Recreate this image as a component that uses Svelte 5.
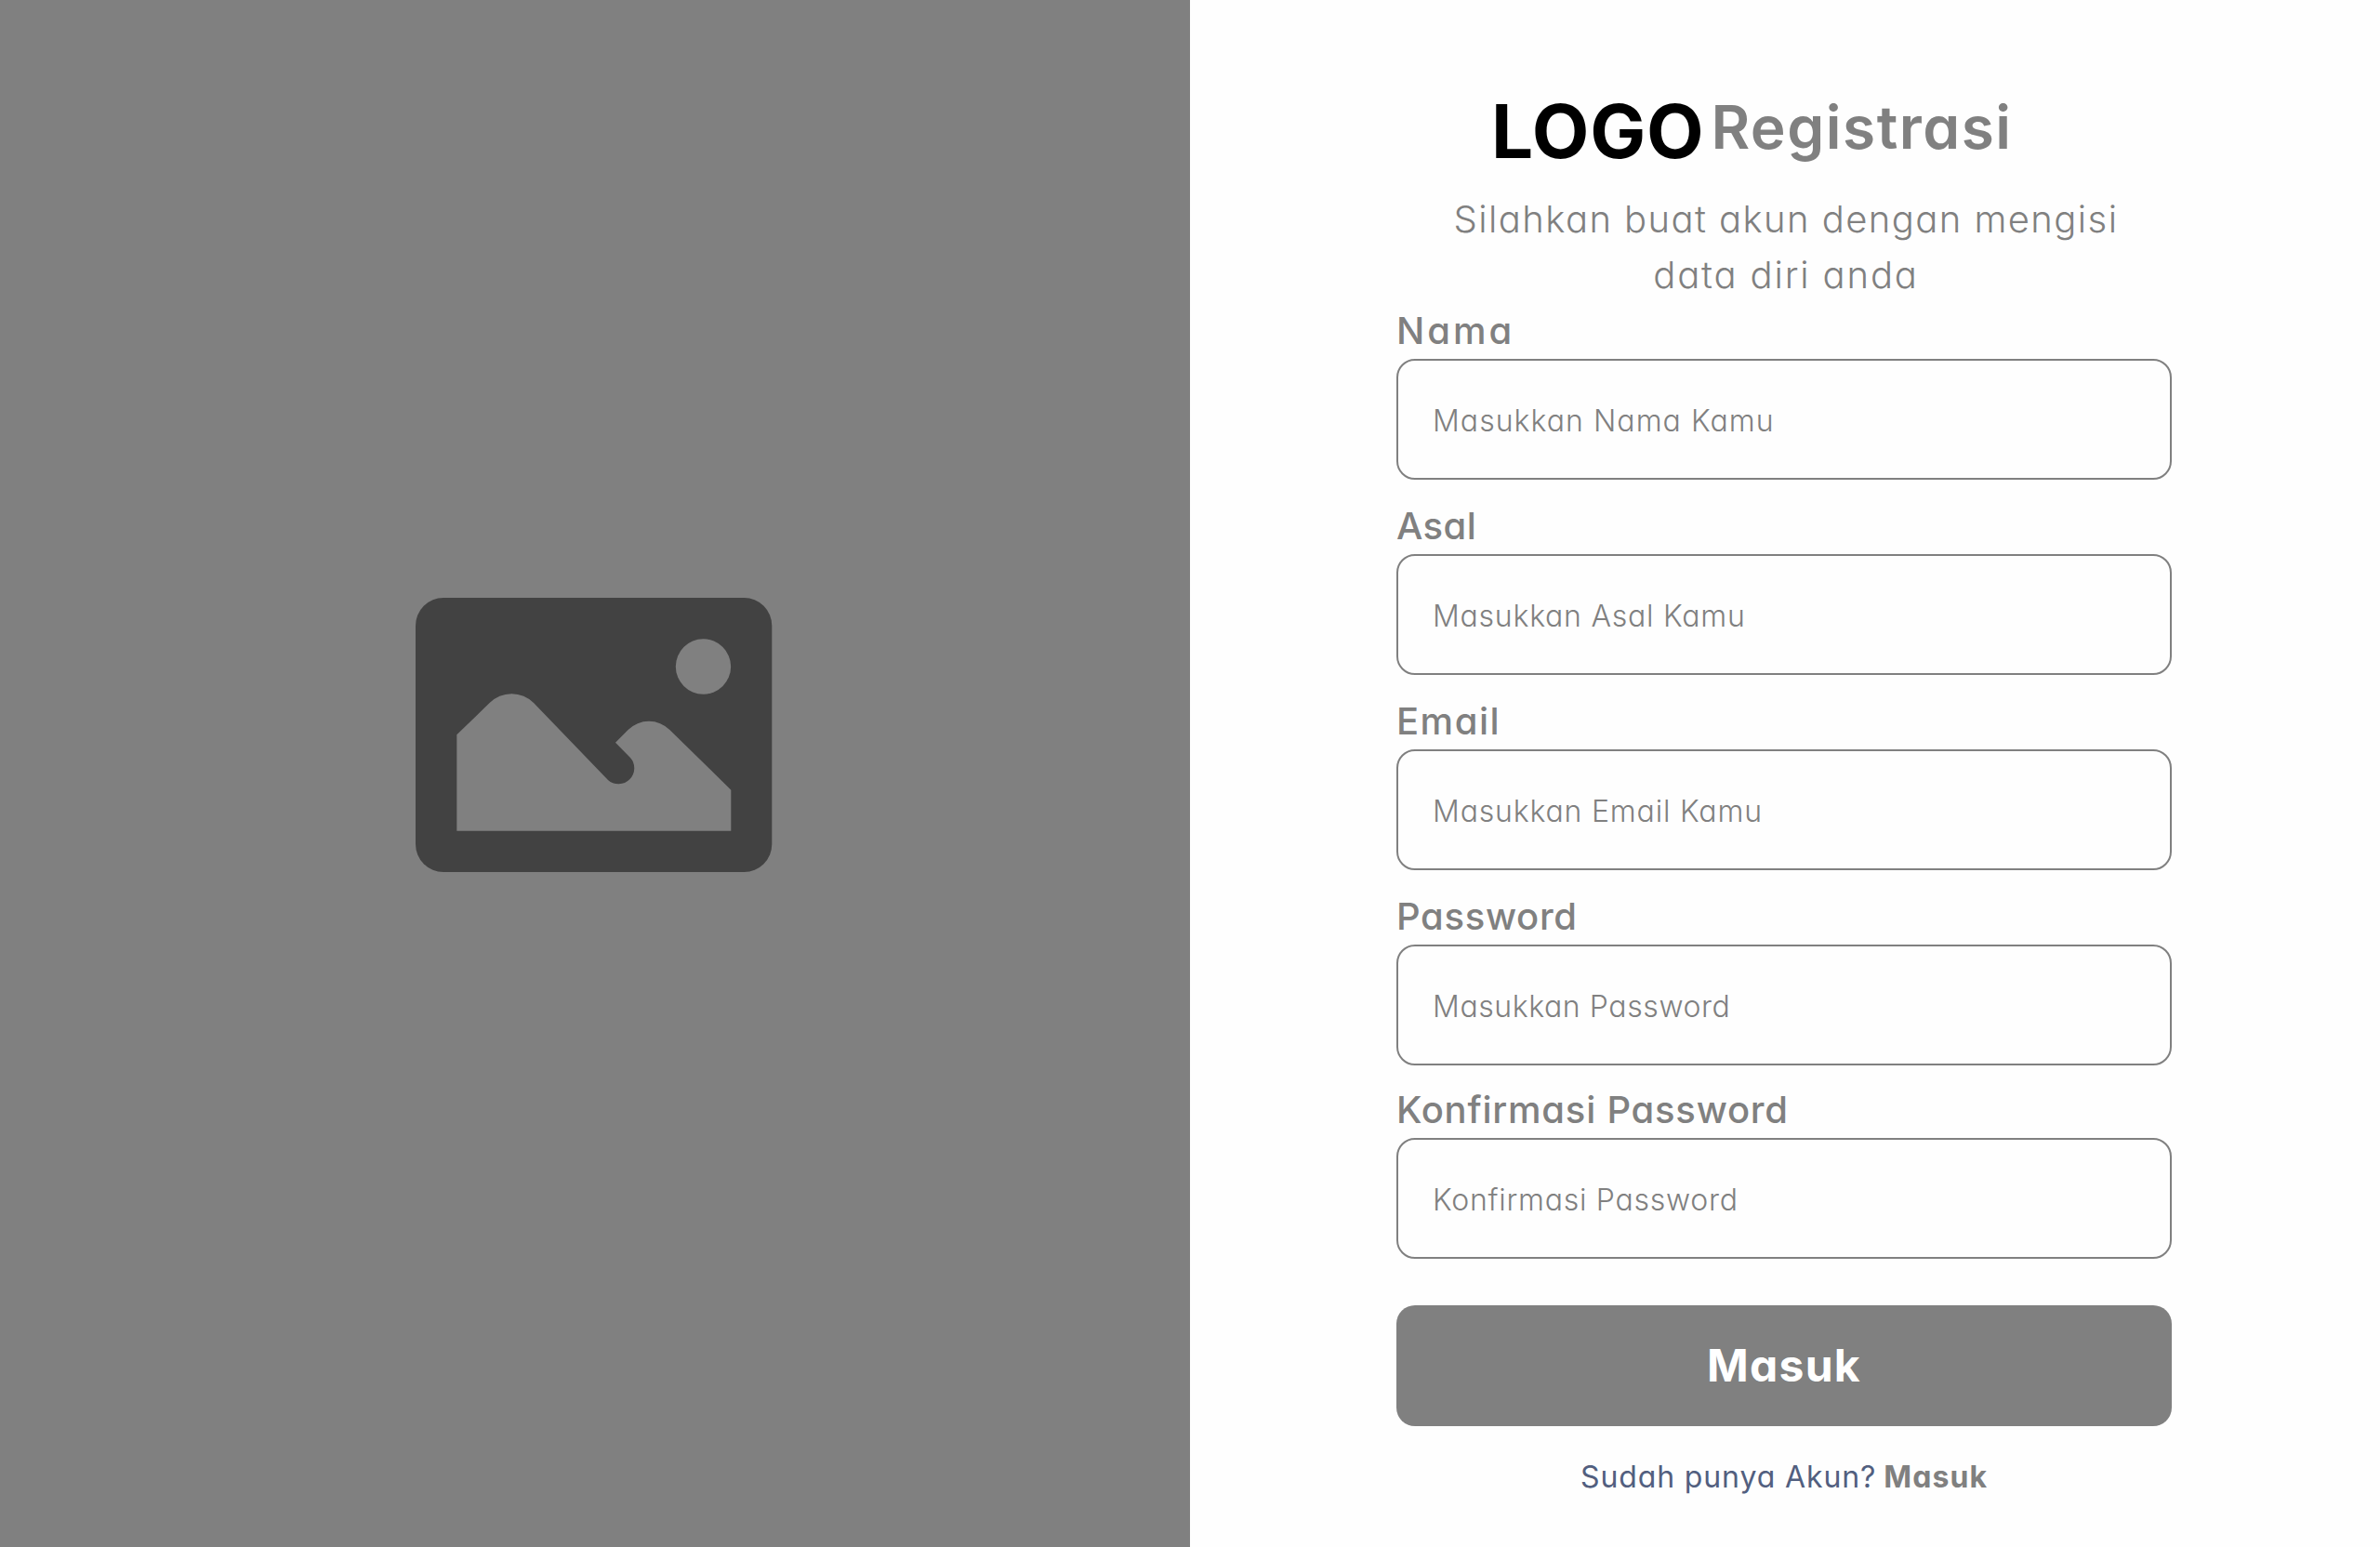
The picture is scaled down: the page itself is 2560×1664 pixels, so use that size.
<script>
  const fields = [
    { id: 'nama', label: 'Nama', hint: 'Masukkan Nama Kamu', type: 'text', labelTrack: 3, hintTrack: 1.04 },
    { id: 'asal', label: 'Asal', hint: 'Masukkan Asal Kamu', type: 'text', labelTrack: 0.4, hintTrack: 0.76 },
    { id: 'email', label: 'Email', hint: 'Masukkan Email Kamu', type: 'email', labelTrack: 1.5, hintTrack: 0.82 },
    { id: 'password', label: 'Password', hint: 'Masukkan Password', type: 'password', labelTrack: 0.68, hintTrack: 0.58 },
    { id: 'konfirmasi', label: 'Konfirmasi Password', hint: 'Konfirmasi Password', type: 'password', labelTrack: 0.76, hintTrack: 0.74 }
  ];
</script>

<main class="page">
  <section class="cover">
    <svg class="picture" viewBox="82 70 1150 885" aria-hidden="true">
      <rect x="82" y="70" width="1150" height="885" rx="90" fill="#424242" />
      <circle cx="1010.5" cy="292" r="89" fill="#808080" />
      <path
        d="M215 822V512L321 409A100 100 0 0 1 463 409L703 658A51 51 0 0 0 775 586L727 537L768 496A95 95 0 0 1 902 496L1100 690V822Z"
        fill="#808080"
      />
    </svg>
  </section>

  <section class="panel">
    <form class="form">
      <header class="brand">
        <span class="logo">LOGO</span>
        <h1>Registrasi</h1>
      </header>
      <p class="intro">Silahkan buat akun dengan mengisi<br /><span>data diri anda</span></p>

      {#each fields as f}
        <div class="field">
          <label for={f.id} style:letter-spacing="{f.labelTrack}px">{f.label}</label>
          <input id={f.id} type={f.type} placeholder={f.hint} style:letter-spacing="{f.hintTrack}px" />
        </div>
      {/each}

      <button type="button">Masuk</button>
      <p class="foot"><span>Sudah punya Akun?</span><b>Masuk</b></p>
    </form>
  </section>
</main>

<style>
  :global(body) {
    margin: 0;
    background: #fefefe;
  }
  .page {
    display: grid;
    grid-template-columns: 1fr 1fr;
    height: 1664px;
    overflow: hidden;
    font-family: Inter, 'Open Sans', sans-serif;
    font-feature-settings: 'cv11';
    color: #808080;
  }
  .cover {
    display: flex;
    justify-content: center;
    padding-top: 643.3px;
    background: #808080;
  }
  .picture {
    width: 383.3px;
    height: 295px;
    margin-right: 2px;
  }
  .panel {
    display: flex;
    justify-content: center;
    background: #fefefe;
  }
  .form {
    display: flex;
    flex-direction: column;
    width: 834px;
    margin-right: 2px;
  }
  .brand {
    display: flex;
    align-items: flex-start;
    gap: 7px;
    height: 113px;
    padding: 93px 0 0 102px;
    line-height: 96px;
  }
  .logo {
    font-size: 80px;
    font-weight: 700;
    letter-spacing: 0.78px;
    color: #000;
  }
  h1 {
    margin: -4px 0 0;
    font-size: 64px;
    font-weight: 600;
    letter-spacing: 1.5px;
  }
  .intro {
    margin: 0;
    padding-left: 4px;
    font-size: 40px;
    font-weight: 300;
    line-height: 60px;
    letter-spacing: 1.42px;
    text-align: center;
    white-space: nowrap;
  }
  .intro span {
    letter-spacing: 1.85px;
  }
  .field {
    display: flex;
    flex-direction: column;
    margin-bottom: 20px;
  }
  .field:nth-of-type(4) {
    margin-bottom: 18px;
  }
  .field:nth-of-type(5) {
    margin-bottom: 50px;
  }
  label {
    font-size: 40px;
    font-weight: 500;
    line-height: 60px;
  }
  input {
    box-sizing: border-box;
    height: 130px;
    padding: 3px 37px 0;
    border: 2px solid #808080;
    border-radius: 20px;
    outline: none;
    background: transparent;
    font-family: inherit;
    font-feature-settings: inherit;
    font-size: 32px;
    font-weight: 300;
    color: #808080;
  }
  input::placeholder {
    color: #808080;
    opacity: 1;
  }
  button {
    height: 130px;
    padding: 0;
    border: 0;
    border-radius: 20px;
    background: #808080;
    font-family: inherit;
    font-feature-settings: inherit;
    font-size: 48px;
    font-weight: 700;
    line-height: 130px;
    letter-spacing: 1.28px;
    color: #fff;
  }
  .foot {
    display: flex;
    gap: 8px;
    margin: 31px 0 0;
    padding-left: 198px;
    font-size: 32px;
    line-height: 48px;
    letter-spacing: 0.88px;
    white-space: nowrap;
    color: #525f7f;
  }
  .foot b {
    font-weight: 700;
    letter-spacing: 1.1px;
    color: #808080;
  }
</style>
